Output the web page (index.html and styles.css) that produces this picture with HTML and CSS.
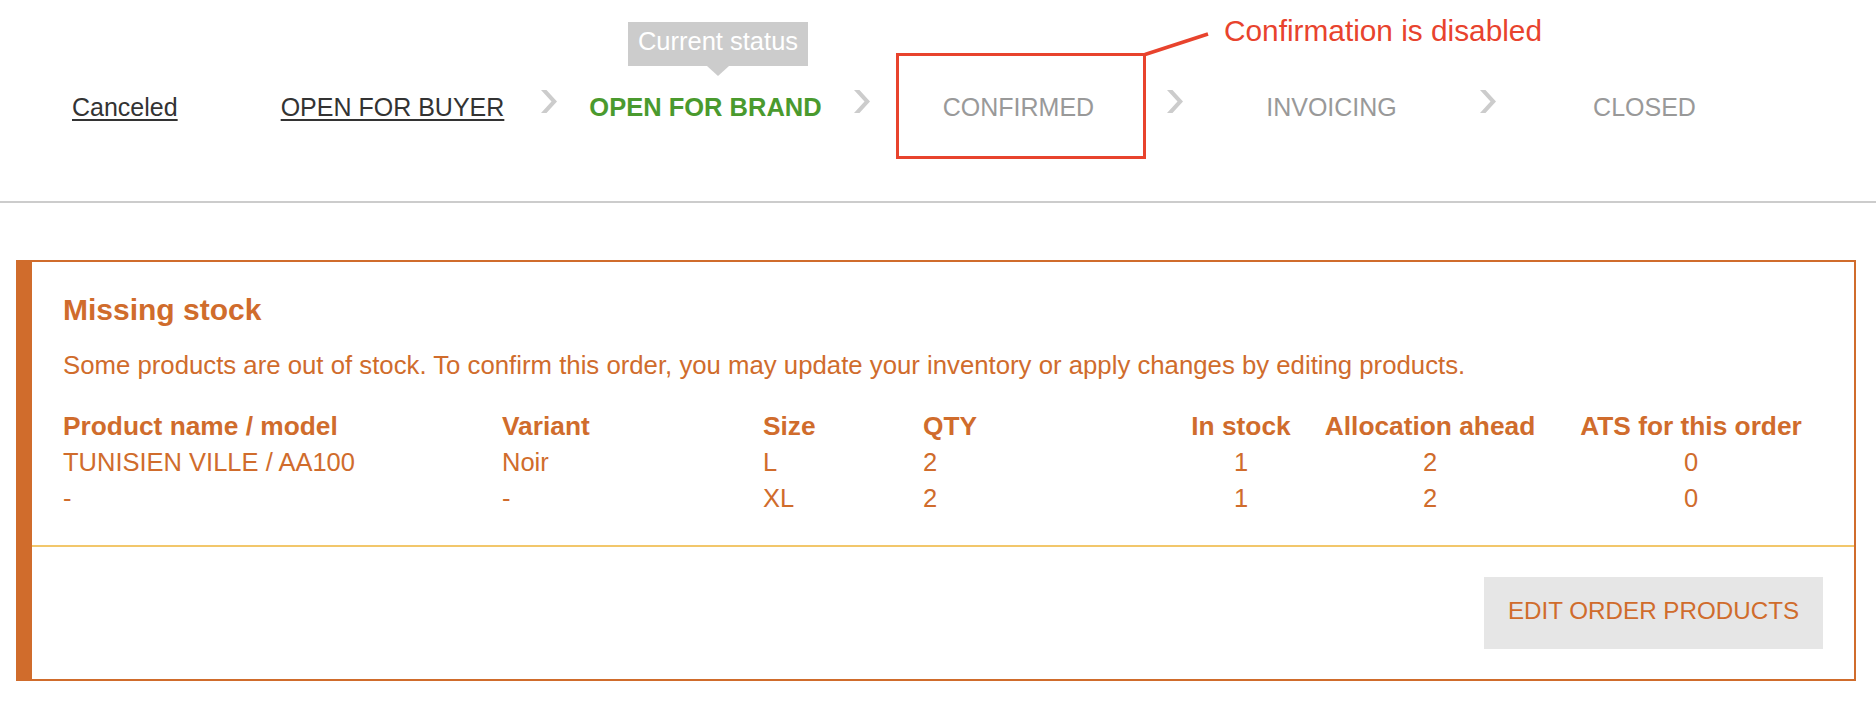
FILE: index.html
```html
<!DOCTYPE html>
<html lang="en">
<head>
<meta charset="utf-8">
<title>Order status</title>
<link rel="stylesheet" href="styles.css">
</head>
<body>
<header class="status-bar">
  <div class="step-cancel"><a class="link" href="#">Canceled</a></div>
  <div class="step"><a class="link" href="#">OPEN FOR BUYER</a></div>
  <svg class="chev" width="16" height="23" viewBox="0 0 16 23"><polygon points="0,0 5.5,0 16,11.5 5.5,23 0,23 10.5,11.5"/></svg>
  <div class="step current">
    <div class="tooltip">Current status</div>
    <span>OPEN FOR BRAND</span>
  </div>
  <svg class="chev" width="16" height="23" viewBox="0 0 16 23"><polygon points="0,0 5.5,0 16,11.5 5.5,23 0,23 10.5,11.5"/></svg>
  <div class="step disabled">
    <span>CONFIRMED</span>
    <div class="note-box"></div>
    <svg class="note-line" width="72" height="28" viewBox="0 0 72 28"><line x1="4" y1="24.5" x2="67" y2="4" /></svg>
    <div class="note-text">Confirmation is disabled</div>
  </div>
  <svg class="chev" width="16" height="23" viewBox="0 0 16 23"><polygon points="0,0 5.5,0 16,11.5 5.5,23 0,23 10.5,11.5"/></svg>
  <div class="step disabled"><span>INVOICING</span></div>
  <svg class="chev" width="16" height="23" viewBox="0 0 16 23"><polygon points="0,0 5.5,0 16,11.5 5.5,23 0,23 10.5,11.5"/></svg>
  <div class="step disabled"><span>CLOSED</span></div>
</header>

<section class="alert">
  <div class="alert-body">
    <h2 class="alert-title">Missing stock</h2>
    <p class="alert-text">Some products are out of stock. To confirm this order, you may update your inventory or apply changes by editing products.</p>
    <div class="stock-table">
      <div class="th">Product name / model</div>
      <div class="th">Variant</div>
      <div class="th">Size</div>
      <div class="th">QTY</div>
      <div class="th c">In stock</div>
      <div class="th c">Allocation ahead</div>
      <div class="th c">ATS for this order</div>

      <div class="td">TUNISIEN VILLE / AA100</div>
      <div class="td">Noir</div>
      <div class="td">L</div>
      <div class="td">2</div>
      <div class="td c">1</div>
      <div class="td c">2</div>
      <div class="td c">0</div>

      <div class="td">-</div>
      <div class="td">-</div>
      <div class="td">XL</div>
      <div class="td">2</div>
      <div class="td c">1</div>
      <div class="td c">2</div>
      <div class="td c">0</div>
    </div>
  </div>
  <div class="alert-footer">
    <button class="btn-edit" type="button">EDIT ORDER PRODUCTS</button>
  </div>
</section>
</body>
</html>
```

FILE: styles.css
```css
html, body {
  margin: 0;
  padding: 0;
  background: #ffffff;
}

body {
  font-family: "Liberation Sans", Arial, sans-serif;
  color: #333333;
}

/* ---------- status bar ---------- */
.status-bar {
  display: flex;
  align-items: flex-start;
  padding: 92px 0 79px 72px;
  border-bottom: 2px solid #cccccc;
  font-size: 25px;
  line-height: 30px;
}

.step-cancel {
  width: 172px;
  flex-shrink: 0;
}

.link {
  color: #333333;
  text-decoration: underline;
  text-decoration-thickness: 2px;
  text-underline-offset: 3px;
}

.step {
  position: relative;
  width: 297px;
  flex-shrink: 0;
  text-align: center;
  white-space: nowrap;
}

.step.current {
  color: #4a9a2e;
  font-weight: 700;
  font-size: 25.5px;
}

.step.disabled {
  color: #999999;
}

.chev {
  flex-shrink: 0;
  margin-top: -2px;
  fill: #cccccc;
}

.tooltip {
  position: absolute;
  left: 71px;
  top: -70px;
  width: 180px;
  height: 44px;
  background: #cccccc;
  color: #ffffff;
  font-weight: 400;
  font-size: 25.5px;
  line-height: 38px;
  text-align: center;
}

.tooltip::after {
  content: "";
  position: absolute;
  left: 79px;
  top: 44px;
  border-left: 11px solid transparent;
  border-right: 11px solid transparent;
  border-top: 10px solid #cccccc;
}

.note-box {
  position: absolute;
  left: 26px;
  top: -39px;
  width: 250px;
  height: 106px;
  box-sizing: border-box;
  border: 3px solid #e8432d;
}

.note-line {
  position: absolute;
  left: 271px;
  top: -62px;
  stroke: #e8432d;
  stroke-width: 3.5;
}

.note-text {
  position: absolute;
  left: 354px;
  top: -78px;
  color: #e8432d;
  font-size: 29.8px;
  line-height: 34px;
  white-space: nowrap;
}

/* ---------- alert card ---------- */
.alert {
  margin: 57px 20px 0 16px;
  border: 2px solid #d06c2c;
  border-left-width: 16px;
  color: #d06c2c;
}

.alert-body {
  padding: 30px 31px 29px 31px;
  border-bottom: 2px solid #f2c76b;
}

.alert-title {
  margin: 0;
  font-size: 30px;
  line-height: 36px;
  font-weight: 700;
}

.alert-text {
  margin: 22px 0 0 0;
  font-size: 25.75px;
  line-height: 30px;
}

.stock-table {
  margin-top: 28px;
  display: grid;
  grid-template-columns: 439px 261px 160px 258px 120px 258px 264px;
  grid-auto-rows: 36px;
  font-size: 25.5px;
  line-height: 36px;
}

.th {
  font-size: 26.3px;
  font-weight: 700;
  height: 37px;
  white-space: nowrap;
}

.td {
  white-space: nowrap;
}

.c {
  text-align: center;
}

.stock-table .th:nth-child(-n+7) {
  margin-bottom: 1px;
}

.alert-footer {
  display: flex;
  justify-content: flex-end;
  padding: 30px 31px 30px 31px;
}

.btn-edit {
  width: 339px;
  height: 72px;
  padding: 0;
  border: none;
  background: #e6e6e6;
  color: #d06c2c;
  font-family: "Liberation Sans", Arial, sans-serif;
  font-size: 24.2px;
  line-height: 28px;
  padding-top: 20px;
  padding-bottom: 24px;
  box-sizing: border-box;
}
```
